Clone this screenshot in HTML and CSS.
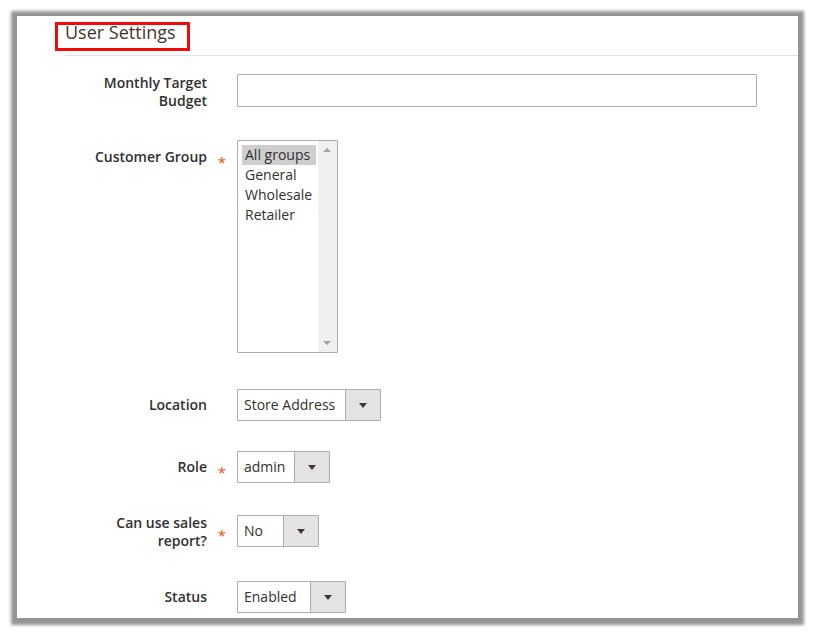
FILE: index.html
```html
<!DOCTYPE html>
<html lang="en">
<head>
<meta charset="utf-8">
<title>User Settings</title>
<link rel="stylesheet" href="styles.css">
</head>
<body>
<div class="frame">
  <div class="panel">
    <div class="head">
      <span class="title">User Settings</span>
    </div>
    <div class="sep"></div>
    <div class="form">
      <div class="row row-budget">
        <div class="label">Monthly Target<br>Budget</div>
        <div class="req"></div>
        <div class="control"><div class="input"></div></div>
      </div>
      <div class="row row-group">
        <div class="label pad8">Customer Group</div>
        <div class="req pad8"><span class="star">*</span></div>
        <div class="control">
          <div class="multi">
            <div class="options">
              <div class="opt selected">All groups</div>
              <div class="opt">General</div>
              <div class="opt">Wholesale</div>
              <div class="opt">Retailer</div>
            </div>
            <div class="scroll">
              <span class="arr up"></span>
              <span class="arr down"></span>
            </div>
          </div>
        </div>
      </div>
      <div class="row row-location">
        <div class="label pad7">Location</div>
        <div class="req"></div>
        <div class="control">
          <div class="select"><span class="val w-loc">Store Address</span><span class="btn"><span class="tri"></span></span></div>
        </div>
      </div>
      <div class="row row-role">
        <div class="label pad7">Role</div>
        <div class="req pad7"><span class="star">*</span></div>
        <div class="control">
          <div class="select"><span class="val w-role">admin</span><span class="btn"><span class="tri"></span></span></div>
        </div>
      </div>
      <div class="row row-sales">
        <div class="label">Can use sales<br>report?</div>
        <div class="req pad7"><span class="star">*</span></div>
        <div class="control shift1">
          <div class="select"><span class="val w-no">No</span><span class="btn"><span class="tri"></span></span></div>
        </div>
      </div>
      <div class="row row-status">
        <div class="label pad7">Status</div>
        <div class="req"></div>
        <div class="control">
          <div class="select"><span class="val w-status">Enabled</span><span class="btn"><span class="tri"></span></span></div>
        </div>
      </div>
    </div>
  </div>
</div>
</body>
</html>
```
FILE: styles.css
```css
* { box-sizing: border-box; }
html, body { margin: 0; padding: 0; background: #ffffff; }
body {
  font-family: "Open Sans", "Noto Sans", Arial, sans-serif;
  color: #303030;
  font-size: 14px;
}
.frame {
  padding: 16px 0 0 17px;
  width: 816px;
  height: 634px;
}
.panel {
  width: 781px;
  height: 602px;
  background: #fff;
  box-shadow: 0 1px 3px 6px rgba(0,0,0,0.42);
  overflow: hidden;
}
.head {
  height: 39px;
  padding: 6px 0 0 38px;
}
.title {
  display: inline-block;
  width: 135px;
  height: 29px;
  border: 3px solid #f20a0a;
  padding-left: 7px;
  font-size: 18px;
  line-height: 14px;
  color: #41362f;
  white-space: nowrap;
}
.sep {
  margin-left: 48px;
  height: 1px;
  background: #e3e3e3;
}
.form { padding-top: 18px; }
.row {
  display: flex;
  align-items: flex-start;
}
.row-group { margin-top: 30px; }
.row-location { margin-top: 36px; }
.row-role { margin-top: 30px; }
.row-sales { margin-top: 31px; }
.row-status { margin-top: 31px; }
.label {
  width: 190px;
  text-align: right;
  font-weight: 600;
  line-height: 18px;
  color: #303030;
}
.pad8 { padding-top: 8px; }
.pad7 { padding-top: 7px; }
.req {
  width: 30px;
  text-align: center;
  line-height: 18px;
}
.star {
  display: inline-block;
  color: #eb5202;
  font-size: 15px;
  position: relative;
  top: 5px;
}
.shift1 { margin-top: 1px; }
.input {
  width: 520px;
  height: 33px;
  border: 1px solid #adadad;
  border-radius: 1px;
  background: #fff;
}
.multi {
  width: 101px;
  height: 213px;
  border: 1px solid #adadad;
  border-radius: 1px;
  display: flex;
  background: #fff;
}
.options {
  flex: 1;
  padding: 4px 0 0 4px;
}
.opt {
  height: 20px;
  line-height: 20px;
  padding-left: 3px;
  color: #303030;
  white-space: nowrap;
}
.opt.selected {
  background: #cecece;
  margin-right: 2px;
}
.scroll {
  width: 19px;
  background: #f0f0f0;
  position: relative;
}
.arr {
  position: absolute;
  left: 5px;
  width: 0;
  height: 0;
  border-left: 4px solid transparent;
  border-right: 4px solid transparent;
}
.arr.up { top: 7px; border-bottom: 4px solid #a3a3a3; }
.arr.down { bottom: 7px; border-top: 4px solid #a3a3a3; }
.select {
  display: inline-flex;
  height: 32px;
  border: 1px solid #adadad;
  border-radius: 1px;
  background: #fff;
}
.val {
  padding-left: 6px;
  line-height: 30px;
  color: #303030;
  white-space: nowrap;
}
.w-loc { width: 107px; }
.w-role { width: 56px; }
.w-no { width: 45px; }
.w-status { width: 72px; }
.btn {
  width: 35px;
  height: 30px;
  border-left: 1px solid #adadad;
  background: #e3e3e3;
  display: flex;
  align-items: center;
  justify-content: center;
}
.tri {
  width: 0;
  height: 0;
  border-left: 4px solid transparent;
  border-right: 4px solid transparent;
  border-top: 5px solid #41362f;
}
```
